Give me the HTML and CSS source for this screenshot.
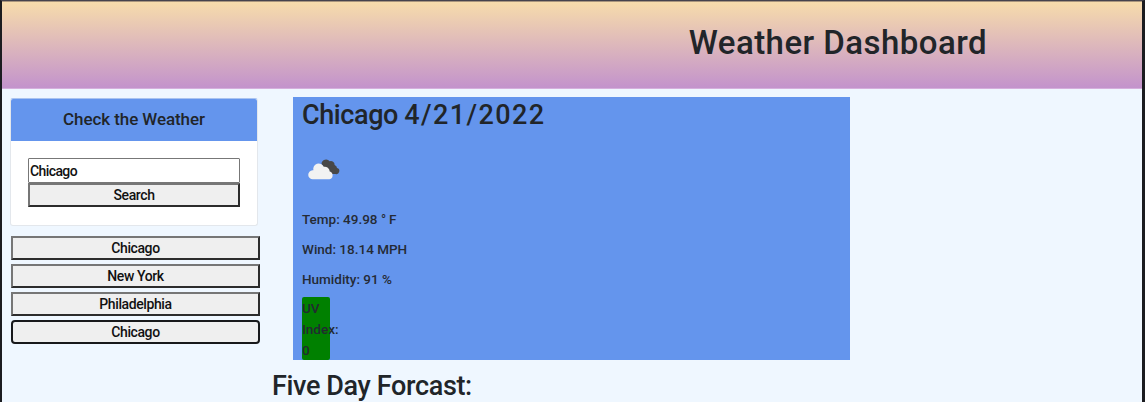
FILE: index.html
```html
<!DOCTYPE html>
<html lang="en">
<head>
<meta charset="utf-8">
<title>Weather Dashboard</title>
<link rel="stylesheet" href="styles.css">
</head>
<body>
<header class="banner"><h1 class="title">Weather Dashboard</h1></header>
<main class="layout">
  <aside class="sidebar">
    <section class="card">
      <h2 class="card-title">Check the Weather</h2>
      <form class="search">
        <input class="field" type="text" value="Chicago" aria-label="City">
        <button class="btn" type="button">Search</button>
      </form>
    </section>
    <nav class="history">
      <button class="btn" type="button">Chicago</button>
      <button class="btn" type="button">New York</button>
      <button class="btn" type="button">Philadelphia</button>
      <button class="btn btn-active" type="button">Chicago</button>
    </nav>
  </aside>
  <div class="content">
    <section class="current">
      <h2 class="city">Chicago <span class="date">4/21/2022</span></h2>
      <svg class="icon" viewBox="0 0 50 50" aria-hidden="true">
        <path fill="#484848" d="M24 19.5a4.6 4.6 0 0 1 8.3-2.3 3.8 3.8 0 0 1 5.1 3.6 3.5 3.5 0 0 1 2.4 3.2 3.1 3.1 0 0 1-1.6 6.1H29z"/>
        <path fill="#f2f2f2" d="M15.2 35.5a4.6 4.6 0 0 1-.3-9.2 5 5 0 0 1 .8 0 5.6 5.6 0 0 1 10.6-3.5 5.2 5.2 0 0 1 6.1 4.8 4.1 4.1 0 0 1-.2 7.9z"/>
      </svg>
      <p class="stat">Temp: 49.98 <span class="unit">°</span>F</p>
      <p class="stat">Wind: 18.14 MPH</p>
      <p class="stat">Humidity: 91 %</p>
      <p class="uv">UV Index: 0</p>
    </section>
    <h2 class="forecast">Five Day Forcast:</h2>
  </div>
</main>
</body>
</html>
```
FILE: styles.css
```css
* { box-sizing: border-box; }
html { background: #eff7ff; }
body {
  margin: 0;
  height: 402px;
  overflow: hidden;
  border: solid #1b1c20;
  border-width: 1px 3px 0 2px;
  border-top-color: #45434c;
  background: #eff7ff;
  color: #212529;
  font-family: Roboto, "Liberation Sans", sans-serif;
  font-weight: 500;
}
h1, h2, p { margin: 0; font-weight: 500; }
.banner {
  height: 88px;
  padding: 21px 155px 0 0;
  text-align: right;
  border-top: 1px solid #a8957d;
  border-bottom: 1px solid #d5b0dc;
  background: linear-gradient(#f7dcab, #c393cc);
}
.title { font-size: 33px; line-height: 40px; letter-spacing: 0.45px; }
.layout { display: flex; }
.sidebar { width: 250px; margin: 9px 0 0 8px; }
.card {
  width: 248px;
  height: 128px;
  border: 1px solid #e3e7ec;
  border-top-color: #a9c3f0;
  border-radius: 3px;
  background: #fff;
  overflow: hidden;
}
.card-title {
  height: 42px;
  background: #6495ed;
  text-align: center;
  font-size: 17px;
  line-height: 41px;
  letter-spacing: -0.08px;
}
.search { padding: 17px; display: flex; flex-direction: column; }
.field {
  height: 25px;
  padding: 1px 0 0 1px;
  border: 1px solid #777;
  border-radius: 1px;
  font: 500 14px Roboto, sans-serif;
  letter-spacing: -0.6px;
  background: #fff;
  color: #111;
}
.btn {
  width: 100%;
  height: 24px;
  padding: 0;
  border: 2px solid;
  border-color: #767676 #2c2c2c #2c2c2c #767676;
  background: #efefef;
  color: #111;
  font: 500 14px/20px Roboto, sans-serif;
  letter-spacing: -0.4px;
}
.history { display: flex; flex-direction: column; gap: 4px; padding: 10px 0 0 1px; }
.btn-active { border-color: #18191b; border-radius: 4px; }
.content { padding: 8px 0 0 12px; }
.current {
  width: 557px;
  height: 263px;
  margin-left: 21px;
  padding: 1px 0 0 9px;
  background: #6495ed;
}
.city { font-size: 27px; line-height: 34px; letter-spacing: -0.4px; }
.date { letter-spacing: 1.4px; }
.icon { display: block; width: 49px; height: 50px; margin: 12px 0 15px -4px; }
.stat { font-size: 13.5px; line-height: 20px; margin-bottom: 10px; color: #252b35; }
.unit { letter-spacing: 3px; }
.uv {
  width: 28px;
  height: 63px;
  margin-top: -2px;
  padding-top: 1px;
  border-radius: 2px;
  background: green;
  font-size: 13.5px;
  line-height: 21px;
  color: #222a31;
}
.forecast { margin-top: 9px; font-size: 27px; line-height: 35px; letter-spacing: -0.36px; }
```
